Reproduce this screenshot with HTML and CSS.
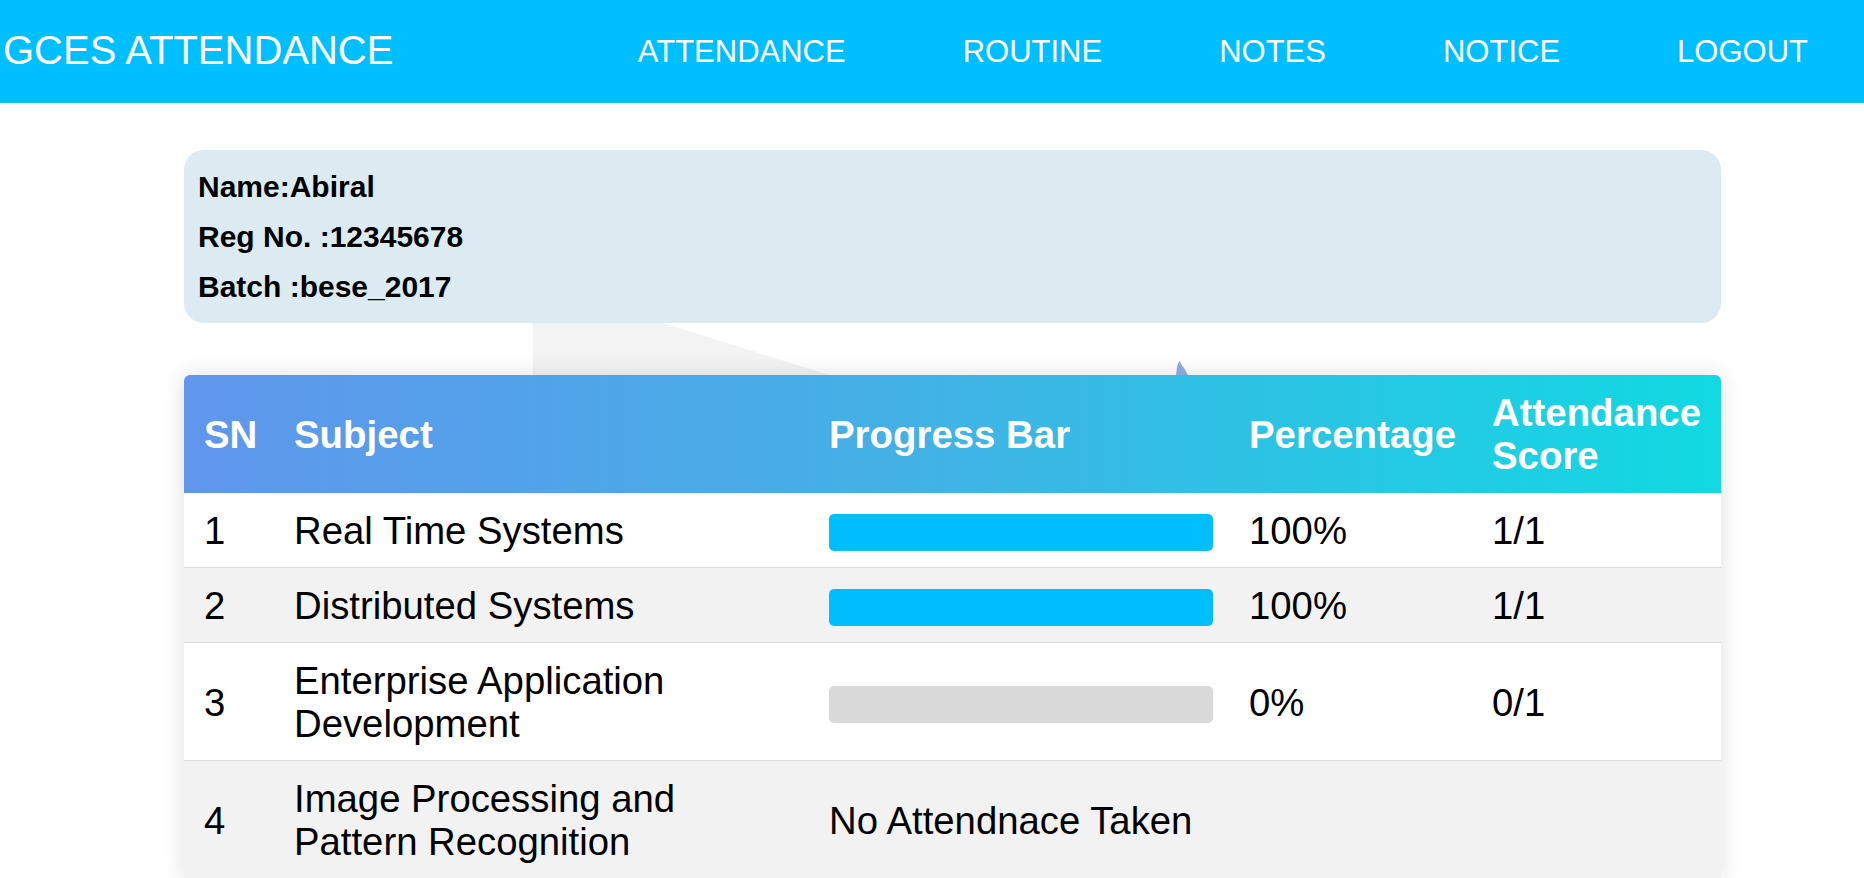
FILE: index.html
```html
<!DOCTYPE html>
<html lang="en">
<head>
<meta charset="utf-8">
<title>GCES Attendance</title>
<link rel="stylesheet" href="styles.css">
</head>
<body>
<header class="topbar">
  <div class="brand">GCES ATTENDANCE</div>
  <nav class="nav">
    <a href="#">ATTENDANCE</a>
    <a href="#">ROUTINE</a>
    <a href="#">NOTES</a>
    <a href="#">NOTICE</a>
    <a href="#">LOGOUT</a>
  </nav>
</header>
<main class="content">
  <section class="info-card">
    <p>Name:Abiral</p>
    <p>Reg No. :12345678</p>
    <p>Batch :bese_2017</p>
  </section>
  <div class="table-wrap">
    <svg class="deco" width="700" height="52" viewBox="0 0 700 52" aria-hidden="true">
      <polygon points="0,0 130,0 296,52 0,52" fill="#f3f3f3"/>
      <path d="M643,52 L644,44 Q645,39 647,38 Q648,42 651,45 L655,52 Z" fill="#8fb0e6"/>
    </svg>
    <table class="att-table">
      <colgroup>
        <col class="c-sn"><col class="c-sub"><col class="c-bar"><col class="c-pct"><col class="c-score">
      </colgroup>
      <thead>
        <tr><th>SN</th><th>Subject</th><th>Progress Bar</th><th>Percentage</th><th>Attendance Score</th></tr>
      </thead>
      <tbody>
        <tr><td>1</td><td>Real Time Systems</td><td><div class="bar"></div></td><td>100%</td><td>1/1</td></tr>
        <tr class="alt"><td>2</td><td>Distributed Systems</td><td><div class="bar"></div></td><td>100%</td><td>1/1</td></tr>
        <tr><td>3</td><td>Enterprise Application Development</td><td><div class="bar empty"></div></td><td>0%</td><td>0/1</td></tr>
        <tr class="alt"><td>4</td><td>Image Processing and Pattern Recognition</td><td colspan="3">No Attendnace Taken</td></tr>
      </tbody>
    </table>
  </div>
</main>
</body>
</html>
```
FILE: styles.css
```css
html, body {
  margin: 0;
  padding: 0;
  background: #ffffff;
}
body {
  font-family: "Liberation Sans", Arial, sans-serif;
  color: #000;
  overflow: hidden;
}
.topbar {
  height: 103px;
  background: #00bfff;
  display: flex;
  align-items: center;
  justify-content: space-between;
  padding: 0 56px 0 3px;
}
.brand {
  color: #fff;
  font-size: 40px;
  margin-top: -3px;
  white-space: nowrap;
}
.nav {
  display: flex;
  gap: 117px;
}
.nav a {
  color: #fff;
  text-decoration: none;
  font-size: 31px;
}
.content {
  padding: 47px 0 0 184px;
  width: 1537px;
}
.info-card {
  background: #dcebf2;
  border-radius: 20px;
  padding: 12px 12px 11px 14px;
}
.info-card p {
  margin: 0;
  font-weight: bold;
  font-size: 30px;
  line-height: 50px;
}
.table-wrap {
  position: relative;
  margin-top: 52px;
}
.deco {
  position: absolute;
  left: 349px;
  top: -52px;
  z-index: 0;
}
.att-table {
  position: relative;
  z-index: 1;
  width: 1537px;
  table-layout: fixed;
  border-collapse: separate;
  border-spacing: 0;
  border-radius: 6px 6px 0 0;
  background: linear-gradient(to right, #6096ec, #44b0e6 45%, #11d9e2) top left / 100% 118px no-repeat, #fff;
  box-shadow: 0 0 22px rgba(0, 0, 0, 0.13);
  font-size: 38.3px;
}
.c-sn { width: 90px; }
.c-sub { width: 537px; }
.c-bar { width: 420px; }
.c-pct { width: 243px; }
.c-score { width: 247px; }
.att-table th {
  color: #fff;
  font-weight: bold;
  font-size: 38.4px;
  text-align: left;
  line-height: 43px;
  padding: 16px 18px;
  vertical-align: middle;
}
.att-table td {
  line-height: 43px;
  padding: 16px 18px 15px;
  vertical-align: middle;
  border-bottom: 1px solid #dddddd;
  background: #fff;
}
.att-table th:nth-child(-n+2),
.att-table td:nth-child(-n+2) {
  padding-left: 20px;
  padding-right: 16px;
}
.att-table th:last-child {
  padding-right: 12px;
}
.att-table tr.alt td {
  background: #f2f2f2;
}
.bar {
  height: 37px;
  margin-top: 4px;
  border-radius: 5px;
  background: #00bfff;
}
.bar.empty {
  background: #dadada;
}
```
